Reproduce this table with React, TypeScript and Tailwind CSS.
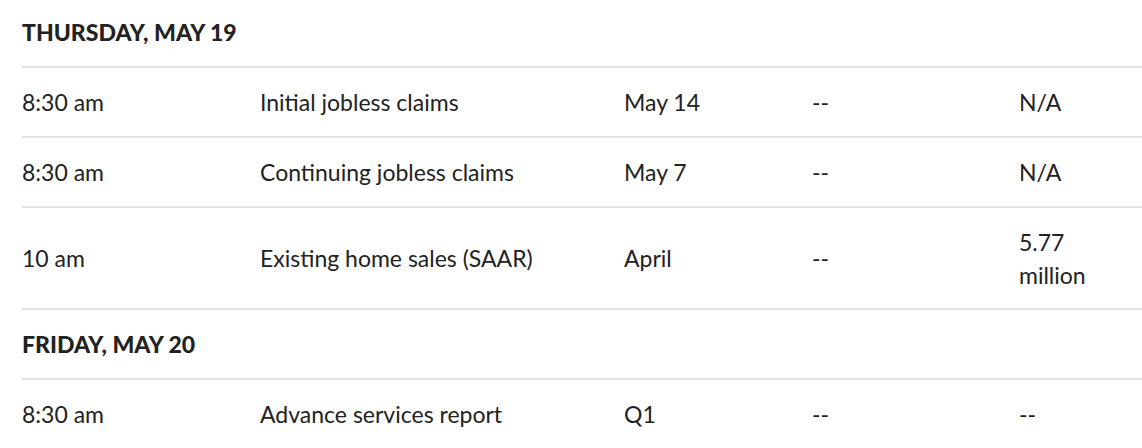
import React from "react";

type Row = { time: string; event: string; period: string; forecast: string; previous: string };

const days: { day: string; rows: Row[] }[] = [
  {
    day: "THURSDAY, MAY 19",
    rows: [
      { time: "8:30 am", event: "Initial jobless claims", period: "May 14", forecast: "--", previous: "N/A" },
      { time: "8:30 am", event: "Continuing jobless claims", period: "May 7", forecast: "--", previous: "N/A" },
      { time: "10 am", event: "Existing home sales (SAAR)", period: "April", forecast: "--", previous: "5.77 million" },
    ],
  },
  {
    day: "FRIDAY, MAY 20",
    rows: [
      { time: "8:30 am", event: "Advance services report", period: "Q1", forecast: "--", previous: "--" },
    ],
  },
];

export default function App() {
  return (
    <div className="bg-white w-[1142px] h-[448px] overflow-hidden pl-[22px] text-[#222] text-[23px] leading-[33px] font-['Lato','Liberation_Sans',sans-serif]">
      <div className="-mt-0.5 w-[1120px]">
        {days.map((d) => (
          <div key={d.day}>
            <div className="border-b-2 border-[#e2e2e2] pt-[18px] pb-[17px] font-black">
              {d.day}
            </div>
            {d.rows.map((r, i) => (
              <div
                key={i}
                className="grid grid-cols-[238px_364px_188px_207px_100px] items-center border-b-2 border-[#e2e2e2] pt-[18px] pb-[17px]"
              >
                <div>{r.time}</div>
                <div>{r.event}</div>
                <div>{r.period}</div>
                <div>{r.forecast}</div>
                <div className="leading-[32.5px]">{r.previous}</div>
              </div>
            ))}
          </div>
        ))}
      </div>
    </div>
  );
}
